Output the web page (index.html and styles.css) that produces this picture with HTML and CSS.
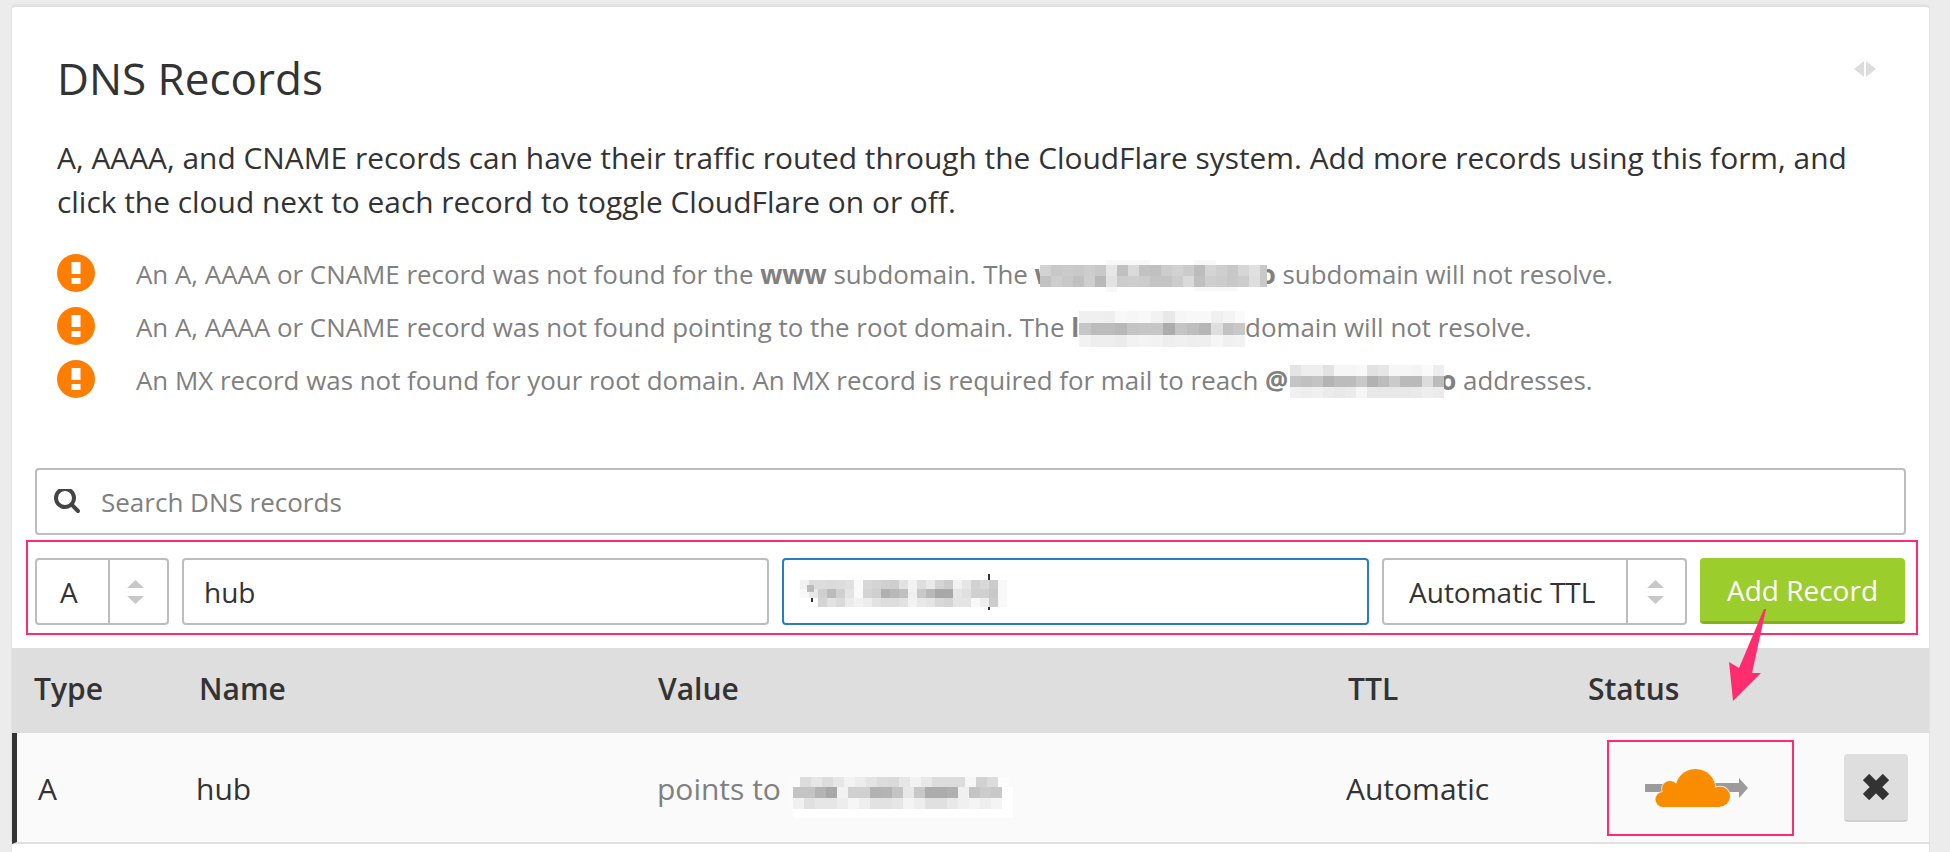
FILE: index.html
```html
<!DOCTYPE html>
<html lang="en">
<head>
<meta charset="utf-8">
<title>DNS Records</title>
<link rel="stylesheet" href="styles.css">
</head>
<body>
<div class="page">
  <main class="card">
    <section class="intro">
      <header class="head">
        <h1 class="title">DNS Records</h1>
        <svg class="collapse" width="22" height="16" viewBox="0 0 22 16"><path fill="#dcdcdc" d="M10 0v16L0 8zM12 0l10 8-10 8z"/></svg>
      </header>
      <p class="lead">A, AAAA, and CNAME records can have their traffic routed through the CloudFlare system. Add more records using this form, and click the cloud next to each record to toggle CloudFlare on or off.</p>
      <ul class="warnings">
        <li class="warning">
          <svg class="warn-icon" width="38" height="38" viewBox="0 0 38 38"><circle cx="19" cy="19" r="19" fill="#ff7d00"/><path fill="#fff" d="M14.5 8h9v12h-9zM14.5 24h9v6h-9z"/></svg>
          <span class="warn-text">An A, AAAA or CNAME record was not found for the <b>www</b> subdomain. The <b>w</b><svg class="mosaic m1" width="227" height="34" viewBox="0 0 227 34">
            <g transform="translate(0 5)"><rect x="0" fill="#d2d2d2"/><rect x="11" fill="#c8c8c8"/><rect x="22" fill="#cacaca"/><rect x="33" fill="#c8c8c8"/><rect x="44" fill="#cdcdcd"/><rect x="55" fill="#c8c8c8"/><rect x="66" fill="#e6e6e6"/><rect x="77" fill="#c0c0c0"/><rect x="88" fill="#dadada"/><rect x="99" fill="#c2c2c2"/><rect x="110" fill="#c0c0c0"/><rect x="121" fill="#cccccc"/><rect x="132" fill="#d2d2d2"/><rect x="143" fill="#cbcbcb"/><rect x="154" fill="#bcbcbc"/><rect x="165" fill="#d4d4d4"/><rect x="176" fill="#cecece"/><rect x="187" fill="#c8c8c8"/><rect x="198" fill="#d6d6d6"/><rect x="209" fill="#e0e0e0"/><rect x="220" fill="#c8c8c8"/></g>
            <g transform="translate(0 16)"><rect x="0" fill="#c2c2c2"/><rect x="11" fill="#cecece"/><rect x="22" fill="#c8c8c8"/><rect x="33" fill="#c0c0c0"/><rect x="44" fill="#cecece"/><rect x="55" fill="#b8b8b8"/><rect x="66" fill="#e2e2e2"/><rect x="77" fill="#cccccc"/><rect x="88" fill="#cecece"/><rect x="99" fill="#cccccc"/><rect x="110" fill="#c4c4c4"/><rect x="121" fill="#c4c4c4"/><rect x="132" fill="#cccccc"/><rect x="143" fill="#dadada"/><rect x="154" fill="#c0c0c0"/><rect x="165" fill="#cecece"/><rect x="176" fill="#cccccc"/><rect x="187" fill="#c8c8c8"/><rect x="198" fill="#cccccc"/><rect x="209" fill="#dedede"/><rect x="220" fill="#c8c8c8"/></g>
            <path fill="#f8f8f8" d="M66 0h44v5H66zM154 0h22v5h-22zM66 27h11v5H66zM154 27h44v4h-44z"/>
          </svg><b class="tail">o</b> subdomain will not resolve.</span>
        </li>
        <li class="warning">
          <svg class="warn-icon" width="38" height="38" viewBox="0 0 38 38"><circle cx="19" cy="19" r="19" fill="#ff7d00"/><path fill="#fff" d="M14.5 8h9v12h-9zM14.5 24h9v6h-9z"/></svg>
          <span class="warn-text">An A, AAAA or CNAME record was not found pointing to the root domain. The <b>l</b><svg class="mosaic m2" width="166" height="36" viewBox="0 0 166 36">
            <g><rect x="0" fill="#f0f0f0"/><rect x="12" fill="#f0f0f0"/><rect x="24" fill="#eeeeee"/><rect x="36" fill="#f8f8f8"/><rect x="48" fill="#f6f6f6"/><rect x="60" fill="#f8f8f8"/><rect x="72" fill="#f2f2f2"/><rect x="84" fill="#e8e8e8"/><rect x="96" fill="#f6f6f6"/><rect x="108" fill="#f8f8f8"/><rect x="120" fill="#f8f8f8"/><rect x="132" fill="#f0f0f0"/><rect x="144" fill="#f4f4f4"/><rect x="156" fill="#fafafa"/></g>
            <g transform="translate(0 12)"><rect x="0" fill="#c6c6c6"/><rect x="12" fill="#bcbcbc"/><rect x="24" fill="#bcbcbc"/><rect x="36" fill="#b8b8b8"/><rect x="48" fill="#c4c4c4"/><rect x="60" fill="#c6c6c6"/><rect x="72" fill="#c6c6c6"/><rect x="84" fill="#acacac"/><rect x="96" fill="#c4c4c4"/><rect x="108" fill="#bebebe"/><rect x="120" fill="#b6b6b6"/><rect x="132" fill="#dedede"/><rect x="144" fill="#c2c2c2"/><rect x="154" fill="#c8c8c8"/></g>
            <g transform="translate(0 24)"><rect x="0" fill="#f2f2f2"/><rect x="12" fill="#eeeeee"/><rect x="24" fill="#eeeeee"/><rect x="36" fill="#ebebeb"/><rect x="48" fill="#f2f2f2"/><rect x="60" fill="#f4f4f4"/><rect x="72" fill="#f2f2f2"/><rect x="84" fill="#eeeeee"/><rect x="96" fill="#f0f0f0"/><rect x="108" fill="#eeeeee"/><rect x="120" fill="#efefef"/><rect x="132" fill="#f6f6f6"/><rect x="144" fill="#f0f0f0"/><rect x="154" fill="#f2f2f2"/></g>
          </svg>domain will not resolve.</span>
        </li>
        <li class="warning">
          <svg class="warn-icon" width="38" height="38" viewBox="0 0 38 38"><circle cx="19" cy="19" r="19" fill="#ff7d00"/><path fill="#fff" d="M14.5 8h9v12h-9zM14.5 24h9v6h-9z"/></svg>
          <span class="warn-text">An MX record was not found for your root domain. An MX record is required for mail to reach <b>@</b><svg class="mosaic m3" width="156" height="33" viewBox="0 0 156 33">
            <g><rect x="0" fill="#e4e4e4"/><rect x="11" fill="#eeeeee"/><rect x="22" fill="#eeeeee"/><rect x="33" fill="#e2e2e2"/><rect x="44" fill="#f6f6f6"/><rect x="55" fill="#f6f6f6"/><rect x="66" fill="#f8f8f8"/><rect x="77" fill="#e2e2e2"/><rect x="88" fill="#e6e6e6"/><rect x="99" fill="#f6f6f6"/><rect x="110" fill="#f6f6f6"/><rect x="121" fill="#f4f4f4"/><rect x="132" fill="#fafafa"/><rect x="143" fill="#eeeeee"/></g>
            <g transform="translate(0 11)"><rect x="0" fill="#c4c4c4"/><rect x="11" fill="#c0c0c0"/><rect x="22" fill="#c4c4c4"/><rect x="33" fill="#b4b4b4"/><rect x="44" fill="#bcbcbc"/><rect x="55" fill="#bcbcbc"/><rect x="66" fill="#c8c8c8"/><rect x="77" fill="#b2b2b2"/><rect x="88" fill="#bcbcbc"/><rect x="99" fill="#cacaca"/><rect x="110" fill="#bababa"/><rect x="121" fill="#bababa"/><rect x="132" fill="#dcdcdc"/><rect x="143" fill="#bcbcbc"/></g>
            <g transform="translate(0 22)"><rect x="0" fill="#f0f0f0"/><rect x="11" fill="#eeeeee"/><rect x="22" fill="#f0f0f0"/><rect x="33" fill="#ebebeb"/><rect x="44" fill="#e8e8e8"/><rect x="55" fill="#ebebeb"/><rect x="66" fill="#f6f6f6"/><rect x="77" fill="#e8e8e8"/><rect x="88" fill="#e8e8e8"/><rect x="99" fill="#e8e8e8"/><rect x="110" fill="#e8e8e8"/><rect x="121" fill="#eaeaea"/><rect x="132" fill="#eeeeee"/><rect x="143" fill="#ebebeb"/></g>
          </svg><b class="tail">o</b> addresses.</span>
        </li>
      </ul>
    </section>

    <section class="tools">
      <label class="search">
        <svg class="search-icon" width="26" height="26" viewBox="0 0 1664 1664"><path fill="#444" transform="translate(0 -128)" d="M1152 704q0-185-131.500-316.500t-316.500-131.500-316.500 131.500-131.500 316.500 131.500 316.500 316.500 131.500 316.500-131.500 131.500-316.500zm512 832q0 52-38 90t-90 38q-54 0-90-38l-343-342q-179 124-399 124-143 0-273.500-55.500t-225-150-150-225-55.500-273.500 55.500-273.500 150-225 225-150 273.500-55.500 273.500 55.500 225 150 150 225 55.500 273.500q0 220-124 399l343 343q37 37 37 90z"/></svg>
        <span class="placeholder">Search DNS records</span>
      </label>
      <form class="record-form">
        <div class="select select-type">
          <span class="select-value">A</span>
          <span class="select-arrows"><svg width="17" height="24" viewBox="0 0 17 24"><path fill="#c8c8c8" d="M8.500 0L17 8H0zM0 16h17l-8.500 8z"/></svg></span>
        </div>
        <div class="field field-name">hub</div>
        <div class="field field-value">
          <svg class="mosaic-input" width="232" height="36" viewBox="0 0 232 36">
            <g transform="translate(0 6)"><rect x="0" fill="#f2f2f2"/><rect x="9" fill="#dcdcdc"/><rect x="18" fill="#dddddd"/><rect x="27" fill="#dadada"/><rect x="36" fill="#dcdcdc"/><rect x="45" fill="#e0e0e0"/><rect x="54" fill="#fafafa"/><rect x="63" fill="#d8d8d8"/><rect x="72" fill="#d4d4d4"/><rect x="81" fill="#d0d0d0"/><rect x="90" fill="#cecece"/><rect x="99" fill="#e2e2e2"/><rect x="108" fill="#f2f2f2"/><rect x="117" fill="#dedede"/><rect x="126" fill="#eaeaea"/><rect x="135" fill="#d4d4d4"/><rect x="144" fill="#cccccc"/><rect x="153" fill="#f2f2f2"/><rect x="162" fill="#e6e6e6"/><rect x="171" fill="#d2d2d2"/><rect x="180" fill="#d8d8d8"/><rect x="189" fill="#cccccc"/><rect x="198" fill="#f8f8f8"/></g>
            <g transform="translate(0 15)"><rect x="0" fill="#f8f8f8"/><rect x="9" fill="#e8e8e8"/><rect x="18" fill="#cfcfcf"/><rect x="27" fill="#bbbbbb"/><rect x="36" fill="#d0d0d0"/><rect x="45" fill="#e4e4e4"/><rect x="54" fill="#fafafa"/><rect x="63" fill="#d4d4d4"/><rect x="72" fill="#d0d0d0"/><rect x="81" fill="#b0b0b0"/><rect x="90" fill="#b8b8b8"/><rect x="99" fill="#c0c0c0"/><rect x="108" fill="#f0f0f0"/><rect x="117" fill="#c8c8c8"/><rect x="126" fill="#b8b8b8"/><rect x="135" fill="#a8a8a8"/><rect x="144" fill="#a8a8a8"/><rect x="153" fill="#e6e6e6"/><rect x="162" fill="#e0e0e0"/><rect x="171" fill="#d0d0d0"/><rect x="180" fill="#d0d0d0"/><rect x="189" fill="#c8c8c8"/><rect x="198" fill="#f8f8f8"/></g>
            <g transform="translate(0 24)"><rect x="18" fill="#d4d4d4"/><rect x="27" fill="#e2e2e2"/><rect x="36" fill="#dadada"/><rect x="45" fill="#ebebeb"/><rect x="54" fill="#f2f2f2"/><rect x="63" fill="#ededed"/><rect x="72" fill="#e2e2e2"/><rect x="81" fill="#dddddd"/><rect x="90" fill="#dddddd"/><rect x="99" fill="#e2e2e2"/><rect x="108" fill="#f2f2f2"/><rect x="117" fill="#e8e8e8"/><rect x="126" fill="#e4e4e4"/><rect x="135" fill="#d8d8d8"/><rect x="144" fill="#d4d4d4"/><rect x="153" fill="#e4e4e4"/><rect x="162" fill="#e4e4e4"/><rect x="171" fill="#f8f8f8"/><rect x="180" fill="#eeeeee"/><rect x="189" fill="#cccccc"/><rect x="198" fill="#f8f8f8"/></g>
            <path fill="#bbbbbb" d="M7 11h7v7H7z"/><path fill="#333" d="M11 24h2v4h-2zM188 0h2v6h-2zM188 33h2v3h-2z"/>
          </svg>
        </div>
        <div class="select select-ttl">
          <span class="select-value">Automatic TTL</span>
          <span class="select-arrows"><svg width="17" height="24" viewBox="0 0 17 24"><path fill="#c8c8c8" d="M8.500 0L17 8H0zM0 16h17l-8.500 8z"/></svg></span>
        </div>
        <button class="add-btn" type="button">Add Record</button>
      </form>
    </section>

    <section class="table">
      <div class="table-head">
        <span>Type</span><span>Name</span><span>Value</span><span>TTL</span><span>Status</span>
      </div>
      <div class="table-row">
        <span>A</span>
        <span>hub</span>
        <span class="value-cell">points to <svg class="mosaic m4" width="224" height="43" viewBox="0 0 224 43">
          <g><rect x="0" fill="#fbfbfb"/><rect x="11" fill="#dcdcdc"/><rect x="22" fill="#e6e6e6"/><rect x="33" fill="#dcdcdc"/><rect x="44" fill="#e6e6e6"/><rect x="55" fill="#f2f2f2"/><rect x="66" fill="#ececec"/><rect x="77" fill="#e4e4e4"/><rect x="88" fill="#dcdcdc"/><rect x="99" fill="#dadada"/><rect x="110" fill="#e6e6e6"/><rect x="121" fill="#f2f2f2"/><rect x="132" fill="#e8e8e8"/><rect x="143" fill="#dcdcdc"/><rect x="154" fill="#dcdcdc"/><rect x="165" fill="#dcdcdc"/><rect x="176" fill="#f6f6f6"/><rect x="187" fill="#d2d2d2"/><rect x="198" fill="#dcdcdc"/><rect x="209" fill="#fcfcfc"/></g>
          <g transform="translate(0 10)"><rect x="0" fill="#fbfbfb"/><rect x="4" fill="#c4c4c4"/><rect x="15" fill="#c4c4c4"/><rect x="26" fill="#b4b4b4"/><rect x="37" fill="#a8a8a8"/><rect x="48" fill="#f2f2f2"/><rect x="59" fill="#d0d0d0"/><rect x="70" fill="#d0d0d0"/><rect x="81" fill="#b2b2b2"/><rect x="92" fill="#b4b4b4"/><rect x="103" fill="#c4c4c4"/><rect x="114" fill="#e8e8e8"/><rect x="125" fill="#c8c8c8"/><rect x="136" fill="#acacac"/><rect x="147" fill="#acacac"/><rect x="158" fill="#b0b0b0"/><rect x="169" fill="#f0f0f0"/><rect x="180" fill="#c4c4c4"/><rect x="191" fill="#cccccc"/><rect x="202" fill="#c8c8c8"/><rect x="213" fill="#ffffff"/></g>
          <g transform="translate(0 21)"><rect x="0" fill="#fbfbfb"/><rect x="4" fill="#f0f0f0"/><rect x="15" fill="#e0e0e0"/><rect x="26" fill="#e6e6e6"/><rect x="37" fill="#e6e6e6"/><rect x="48" fill="#ededed"/><rect x="59" fill="#f6f6f6"/><rect x="70" fill="#eeeeee"/><rect x="81" fill="#e2e2e2"/><rect x="92" fill="#e2e2e2"/><rect x="103" fill="#e6e6e6"/><rect x="114" fill="#f4f4f4"/><rect x="125" fill="#ededed"/><rect x="136" fill="#e0e0e0"/><rect x="147" fill="#e0e0e0"/><rect x="158" fill="#e8e8e8"/><rect x="169" fill="#f0f0f0"/><rect x="180" fill="#f4f4f4"/><rect x="191" fill="#eeeeee"/><rect x="202" fill="#f4f4f4"/><rect x="213" fill="#ffffff"/></g>
          <path fill="#ffffff" d="M4 32h220v9H4z"/>
        </svg></span>
        <span>Automatic</span>
        <span class="status-box">
          <svg class="cloud" width="103" height="38" viewBox="0 0 103 38">
            <path fill="#9b9b9b" d="M0 15h22v8H0zM68 14h26V9l9 10-9 10v-6H68z"/>
            <g fill="#f98c00" stroke="#f4f4f4" stroke-width="1.500"><circle cx="50.500" cy="20" r="20"/><circle cx="25" cy="20" r="8"/><circle cx="18" cy="30.500" r="7.500"/><circle cx="75" cy="27.500" r="10"/></g>
            <g fill="#f98c00"><circle cx="50.500" cy="20" r="20"/><circle cx="25" cy="20" r="8"/><circle cx="18" cy="30.500" r="7.500"/><circle cx="75" cy="27.500" r="10"/><path d="M18 20h57v18H18z"/></g>
          </svg>
        </span>
        <button class="delete-btn" type="button" aria-label="Delete"><svg width="26" height="26" viewBox="0 0 26 26"><path fill="none" stroke="#333" stroke-width="9" d="M3 3l20 20M23 3L3 23"/></svg></button>
      </div>
    </section>
  </main>
  <svg class="callout" width="45" height="100" viewBox="0 0 45 100"><path fill="#ff2d6f" d="M39 4h2L27 68l9 0-28 28L4 57l10 6z"/></svg>
</div>
</body>
</html>
```

FILE: styles.css
```css
* { box-sizing: border-box; }
html, body { margin: 0; height: 852px; overflow: hidden; }
body {
  background: #ececec;
  font-family: "Open Sans", "Liberation Sans", sans-serif;
  color: #333;
}
.page { position: relative; padding: 5px 21px 0 12px; }
.card {
  background: #fff;
  border-top: 2px solid #e0e0e0;
  border-radius: 4px 4px 0 0;
  box-shadow: 0 0 0 1px #e4e4e4;
  height: 847px;
}
.intro { padding: 0 46px 0 45px; }
.head { display: flex; justify-content: space-between; align-items: flex-start; padding-top: 45px; height: 129px; }
.title { margin: 0; font-size: 44px; line-height: 52px; font-weight: 400; color: #333; }
.collapse { margin: 9px 7px 0 0; }
.lead { margin: 0; font-size: 29.900px; line-height: 44px; font-weight: 400; color: #333; }
.warnings { list-style: none; margin: 30px 0 0; padding: 0; }
.warning { display: flex; height: 53px; }
.warn-icon { flex: none; margin-right: 41px; }
.warn-text { font-size: 25.900px; line-height: 38px; color: #808080; padding-top: 1px; white-space: nowrap; }
.warn-text b { font-weight: 700; }
.mosaic { display: inline-block; position: relative; z-index: 1; vertical-align: baseline; }
.mosaic rect { width: 11px; height: 11px; }
.m1 { margin: -24px -7px -10px -17px; }
.m2 { margin: -26px 0 -10px 0; }
.m2 rect { width: 12px; height: 12px; }
.m3 { margin: -25px -6px -8px 2px; }
.m4 { margin: -23px 0 -20px 0; }
.tail { position: relative; }

.search {
  display: flex; align-items: center; height: 67px; margin: 55px 23px 0;
  border: 2px solid #bdbdbd; border-radius: 4px; padding-left: 17px;
}
.search-icon { flex: none; margin-right: 21px; }
.placeholder { font-size: 26px; color: #808080; }
.record-form {
  display: flex; gap: 13px; margin: 5px 11px 0 14px; height: 95px;
  border: 2px solid #ff2d6f; padding: 16px 11px 8px 7px;
}
.select, .field {
  display: flex; align-items: center; height: 67px; border: 2px solid #bdbdbd;
  border-radius: 4px; font-size: 28px; color: #333; background: #fff;
}
.select-type { width: 134px; flex: none; }
.select-type .select-value { width: 73px; padding-left: 23px; }
.select-value { display: flex; align-items: center; height: 100%; border-right: 2px solid #bdbdbd; }
.select-arrows { flex: 1; display: flex; align-items: center; justify-content: center; }
.select-type .select-arrows { padding-right: 6px; }
.select-ttl .select-arrows { padding-right: 3px; }
.select-arrows svg { display: block; }
.field-name { width: 587px; flex: none; padding-left: 20px; }
.field-value { width: 587px; flex: none; border-color: #2a7cc0; padding-left: 16px; }
.mosaic-input { display: block; }
.mosaic-input rect { width: 9px; height: 9px; }
.select-ttl { width: 305px; flex: none; }
.select-ttl .select-value { width: 244px; padding-left: 25px; }
.add-btn {
  width: 205px; height: 66px; border: 0; border-bottom: 3px solid #86b01f; border-radius: 4px;
  background: #9bcd2d; color: #fff; font: 500 28px "Open Sans", "Liberation Sans", sans-serif; padding: 0;
}

.table { margin-top: 13px; }
.table-head {
  display: grid; grid-template-columns: 165px 459px 690px 240px 1fr; align-items: center;
  height: 85px; background: #dedede; padding: 0 0 4px 22px; font-size: 30px; font-weight: 600; color: #333;
}
.table-row {
  display: grid; grid-template-columns: 158px 461px 689px 261px 187px 1fr; align-items: center;
  height: 111px; background: #fafafa; border-left: 5px solid #333; border-bottom: 2px solid #e0e0e0;
  padding-left: 21px; font-size: 30px; color: #333;
}
.table-row > span:not(.status-box) { padding-top: 2px; }
.value-cell { color: #808080; white-space: nowrap; }
.status-box {
  display: flex; align-items: center; justify-content: center; height: 96px;
  border: 2px solid #ff2d6f; padding-right: 8px;
}
.delete-btn {
  justify-self: end; width: 64px; height: 68px; margin-right: 21px; padding: 0; border: 0;
  border-bottom: 2px solid #cfcfcf; border-radius: 4px; background: #dedede;
  display: flex; align-items: center; justify-content: center;
}
.callout { position: absolute; left: 1725px; top: 605px; }
```
